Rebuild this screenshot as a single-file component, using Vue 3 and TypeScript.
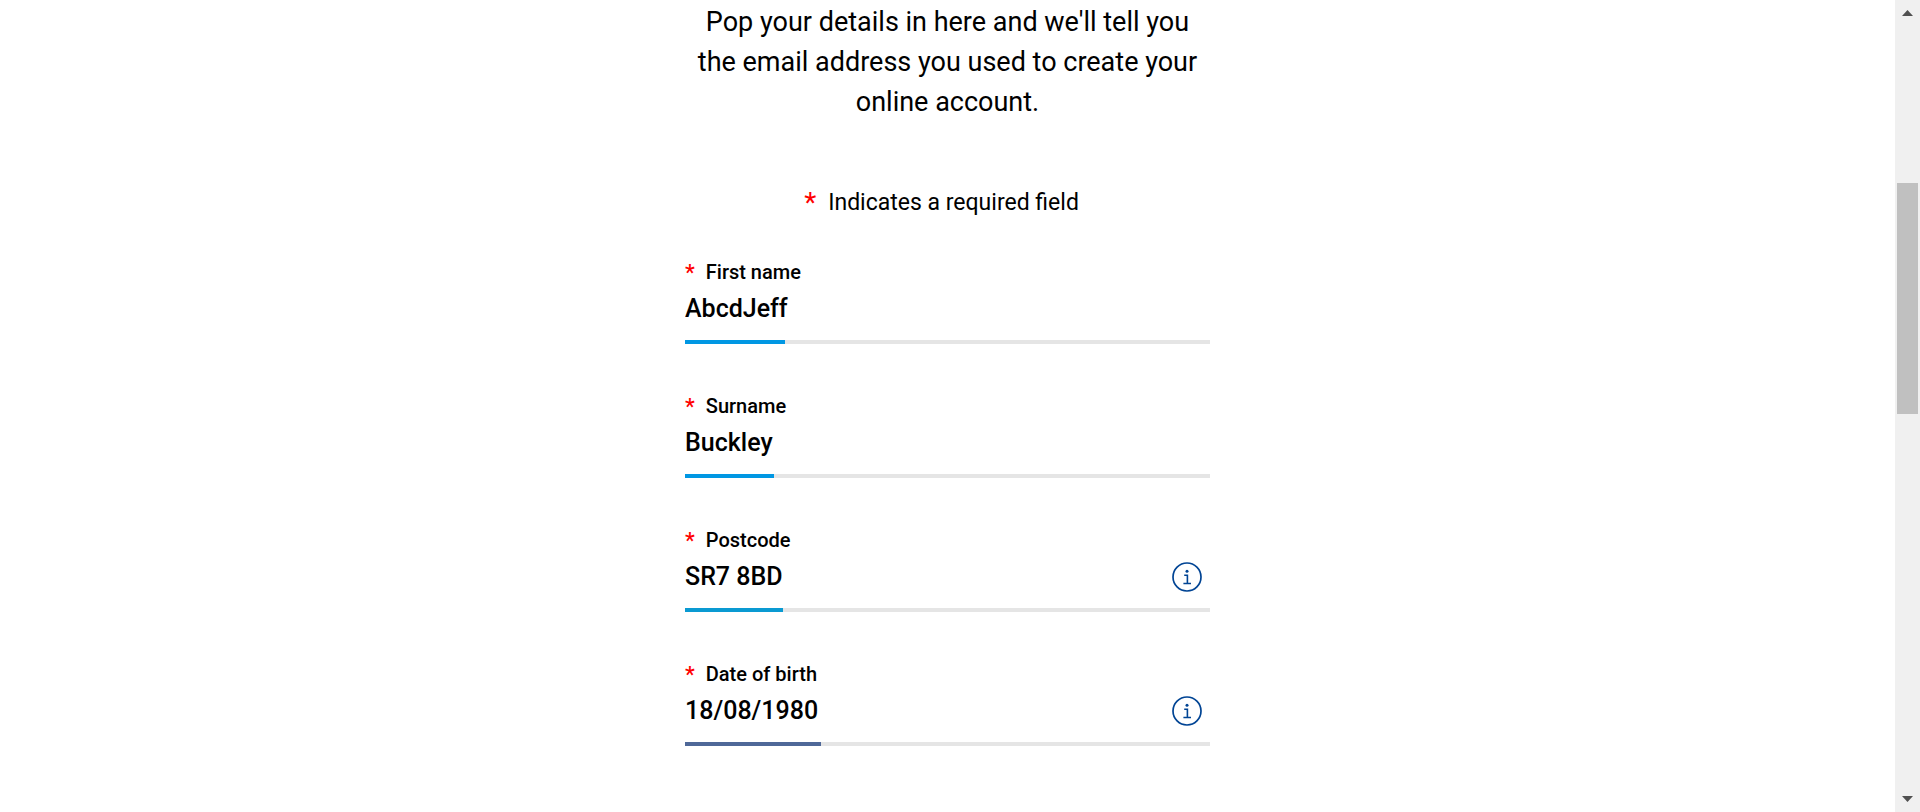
<script setup lang="ts">
import { ref } from 'vue'

interface Field {
  id: string
  label: string
  value: string
  fill: number
  tone: string
  info: boolean
}

const fields = ref<Field[]>([
  { id: 'first-name', label: 'First name', value: 'AbcdJeff', fill: 100, tone: 'bright', info: false },
  { id: 'surname', label: 'Surname', value: 'Buckley', fill: 89, tone: 'bright', info: false },
  { id: 'postcode', label: 'Postcode', value: 'SR7 8BD', fill: 98, tone: 'teal', info: true },
  { id: 'dob', label: 'Date of birth', value: '18/08/1980', fill: 136, tone: 'slate', info: true },
])
</script>

<template>
  <div class="page">
    <main class="content">
      <form class="form" @submit.prevent>
        <p class="intro">
          Pop your details in here and we'll tell you<br />
          the email address you used to create your<br />
          online account.
        </p>
        <p class="required"><span class="star">*</span>Indicates a required field</p>
        <div v-for="field in fields" :key="field.id" class="field">
          <label class="label" :for="field.id"><span class="star">*</span>{{ field.label }}</label>
          <div class="row">
            <input :id="field.id" v-model="field.value" class="input" type="text" />
            <button v-if="field.info" class="info" type="button" :aria-label="'About ' + field.label">
              <svg viewBox="0 0 30 30" width="30" height="30" fill="none" stroke="#004494">
                <circle cx="15" cy="15" r="14" stroke-width="1.7" />
                <path d="M12.2 13.3H15.4V21.4M11.4 21.5H19" stroke-width="1.6" />
                <circle cx="15" cy="9.3" r="1.5" fill="#004494" stroke="none" />
              </svg>
            </button>
          </div>
          <div class="line">
            <div class="fill" :class="field.tone" :style="{ width: field.fill + 'px' }"></div>
          </div>
        </div>
      </form>
    </main>
    <div class="scrollbar" aria-hidden="true">
      <svg class="arrow" viewBox="0 0 25 25"><path d="M7 16L12.5 10L18 16Z" fill="#505050" /></svg>
      <div class="before"></div>
      <div class="thumb"></div>
      <div class="after"></div>
      <svg class="arrow" viewBox="0 0 25 25"><path d="M7 9L12.5 15L18 9Z" fill="#505050" /></svg>
    </div>
  </div>
</template>

<style>
body {
  margin: 0;
  background: #fff;
}
</style>

<style scoped>
.page {
  display: flex;
  min-height: 100vh;
  font-family: Roboto, "Liberation Sans", sans-serif;
  color: #000;
}
.content {
  flex: 1;
  display: flex;
  justify-content: center;
}
.form {
  width: 100%;
  max-width: 525px;
}
.intro {
  margin: 0;
  padding-top: 2px;
  font-size: 27px;
  line-height: 40px;
  font-weight: 400;
  text-align: center;
  white-space: nowrap;
}
.required {
  display: flex;
  justify-content: center;
  gap: 12px;
  margin: 64px 12px 39px 0;
  font-size: 23px;
  line-height: 34px;
}
.required .star {
  font-size: 28px;
}
.star {
  color: #f00;
}
.field {
  margin-bottom: 49px;
}
.label {
  display: flex;
  gap: 11px;
  font-size: 20px;
  line-height: 27px;
  font-weight: 500;
}
.label .star {
  font-size: 22px;
}
.row {
  display: flex;
  align-items: center;
  height: 46px;
  padding-right: 8px;
}
.input {
  flex: 1;
  min-width: 0;
  padding: 0;
  border: 0;
  outline: 0;
  background: transparent;
  color: #000;
  font-family: inherit;
  font-size: 25px;
  line-height: 46px;
  font-weight: 500;
}
.info {
  display: flex;
  padding: 0;
  border: 0;
  background: transparent;
}
.line {
  height: 4px;
  margin-top: 8px;
  background: #e5e5e5;
}
.fill {
  height: 4px;
}
.bright {
  background: #0097e3;
}
.teal {
  background: #0a9ad2;
}
.slate {
  background: #4f6898;
}
.scrollbar {
  display: flex;
  flex-direction: column;
  align-items: center;
  width: 25px;
  background: #f0f0f0;
}
.arrow {
  width: 25px;
  height: 25px;
}
.before {
  flex: 158;
}
.thumb {
  flex: 231;
  width: 21px;
  background: #c0c0c0;
}
.after {
  flex: 373;
}
</style>
